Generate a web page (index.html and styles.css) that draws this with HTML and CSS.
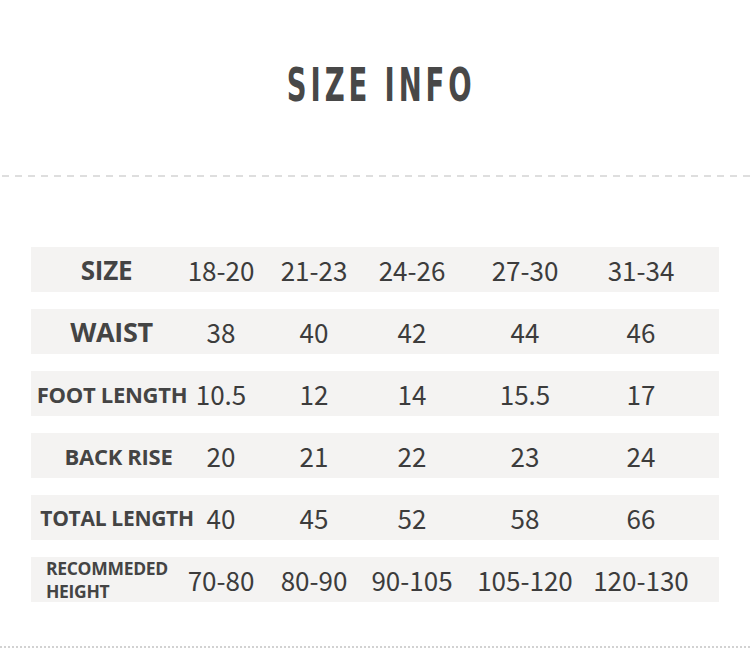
FILE: index.html
```html
<!DOCTYPE html>
<html>
<head>
<meta charset="utf-8">
<link rel="stylesheet" href="styles.css">
</head>
<body>
<div class="page">
  <header class="head">
    <h1 class="title">SIZE INFO</h1>
  </header>
  <div class="dash"></div>
  <section class="table">
    <div class="row">
      <div class="label l-size">SIZE</div>
      <div class="val">18-20</div><div class="val">21-23</div><div class="val">24-26</div><div class="val">27-30</div><div class="val">31-34</div>
    </div>
    <div class="row">
      <div class="label l-waist">WAIST</div>
      <div class="val">38</div><div class="val">40</div><div class="val">42</div><div class="val">44</div><div class="val">46</div>
    </div>
    <div class="row">
      <div class="label l-foot">FOOT LENGTH</div>
      <div class="val">10.5</div><div class="val">12</div><div class="val">14</div><div class="val">15.5</div><div class="val">17</div>
    </div>
    <div class="row">
      <div class="label l-back">BACK RISE</div>
      <div class="val">20</div><div class="val">21</div><div class="val">22</div><div class="val">23</div><div class="val">24</div>
    </div>
    <div class="row">
      <div class="label l-total">TOTAL LENGTH</div>
      <div class="val">40</div><div class="val">45</div><div class="val">52</div><div class="val">58</div><div class="val">66</div>
    </div>
    <div class="row">
      <div class="label l-rec">RECOMMEDED<br>HEIGHT</div>
      <div class="val">70-80</div><div class="val">80-90</div><div class="val">90-105</div><div class="val">105-120</div><div class="val">120-130</div>
    </div>
  </section>
  <div class="dots"></div>
</div>
</body>
</html>
```
FILE: styles.css
```css
html, body {
  margin: 0;
  padding: 0;
  background: #fff;
}
.page {
  width: 750px;
  height: 667px;
  display: flex;
  flex-direction: column;
}
.head {
  height: 175px;
  display: flex;
  justify-content: center;
}
.title {
  margin: 0 0 0 12px;
  padding-top: 57px;
  font-family: "DejaVu Sans", sans-serif;
  font-stretch: condensed;
  font-weight: bold;
  font-size: 47px;
  line-height: 56px;
  letter-spacing: 6px;
  color: #484848;
  transform: scaleX(0.65);
}
.dash {
  height: 2px;
  margin-left: 2px;
  background: repeating-linear-gradient(90deg, #dedede 0 7px, transparent 7px 13px);
}
.table {
  margin: 70px 0 0 31px;
  width: 688px;
  display: flex;
  flex-direction: column;
  gap: 17px;
}
.row {
  height: 45px;
  background: #f4f3f2;
  display: grid;
  grid-template-columns: 147px 86px 100px 96px 130px 102px 1fr;
  align-items: center;
  color: #3c3c3c;
}
.val {
  display: flex;
  justify-content: center;
  white-space: nowrap;
  font-family: "Noto Sans CJK SC", "Noto Sans", sans-serif;
  font-size: 26px;
  line-height: 30px;
}
.label {
  display: flex;
  justify-content: center;
  white-space: nowrap;
  font-family: "Open Sans", sans-serif;
  font-weight: 700;
  color: #444;
  letter-spacing: -0.3px;
}
.l-size {
  font-size: 26px;
  padding-left: 4px;
}
.l-waist {
  font-size: 27px;
  padding-left: 14px;
}
.l-foot {
  font-size: 22px;
  padding-left: 15px;
}
.l-back {
  font-size: 22px;
  padding-left: 28px;
}
.l-total {
  font-size: 21px;
  padding-left: 25px;
}
.l-rec {
  display: block;
  font-size: 17.5px;
  line-height: 23px;
  padding-left: 15px;
}
.dots {
  height: 2px;
  margin-top: 44px;
  background: repeating-linear-gradient(90deg, #d2d2d2 0 2px, transparent 2px 4px);
}
```
